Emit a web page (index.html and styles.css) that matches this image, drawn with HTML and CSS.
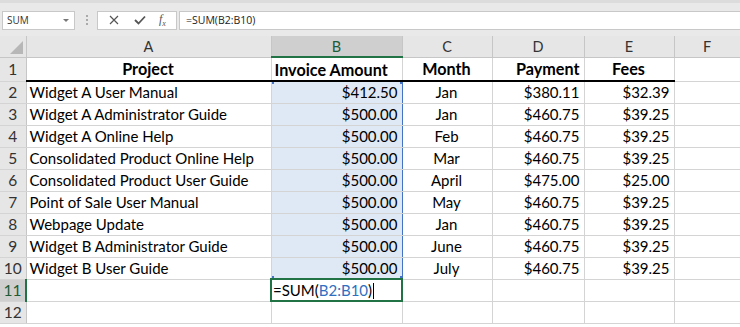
FILE: index.html
```html
<!DOCTYPE html>
<html lang="en">
<head>
    <meta charset="UTF-8">
    <title>Planilha</title>
    <link rel="stylesheet" href="styles.css">
</head>
<body>
    <div class="barra-formula">
        <div class="caixa-nome">
            <span>SUM</span>
            <span class="seta"></span>
        </div>
        <div class="pontos"><i></i><i></i><i></i></div>
        <div class="botoes-funcao">
            <svg width="12" height="12" viewBox="0 0 12 12"><path d="M2 2 L10 10 M10 2 L2 10" stroke="#555" stroke-width="1.2" fill="none"/></svg>
            <svg width="14" height="12" viewBox="0 0 14 12"><path d="M2 6 L5.5 9.5 L12 2.5" stroke="#555" stroke-width="1.8" fill="none"/></svg>
            <span class="fx">f<sub>x</sub></span>
        </div>
        <div class="entrada-formula">=SUM(B2:B10)</div>
    </div>
    <table class="planilha">
        <colgroup>
            <col style="width:26px">
            <col style="width:245px">
            <col style="width:131px">
            <col style="width:90px">
            <col style="width:92px">
            <col style="width:90px">
            <col style="width:66px">
        </colgroup>
        <thead>
            <tr>
                <th class="canto"><span class="triangulo"></span></th>
                <th>A</th>
                <th class="col-ativa">B</th>
                <th>C</th>
                <th>D</th>
                <th>E</th>
                <th>F</th>
            </tr>
        </thead>
        <tbody>
            <tr class="titulos">
                <th>1</th>
                <td class="centro">Project</td>
                <td>Invoice Amount</td>
                <td class="centro">Month</td>
                <td class="direita">Payment</td>
                <td class="centro">Fees</td>
                <td class="vazio"></td>
            </tr>
            <tr>
                <th>2</th><td>Widget A User Manual</td><td class="direita sel sel-topo">$412.50</td><td class="centro">Jan</td><td class="direita">$380.11</td><td class="direita">$32.39</td><td></td>
            </tr>
            <tr>
                <th>3</th><td>Widget A Administrator Guide</td><td class="direita sel">$500.00</td><td class="centro">Jan</td><td class="direita">$460.75</td><td class="direita">$39.25</td><td></td>
            </tr>
            <tr>
                <th>4</th><td>Widget A Online Help</td><td class="direita sel">$500.00</td><td class="centro">Feb</td><td class="direita">$460.75</td><td class="direita">$39.25</td><td></td>
            </tr>
            <tr>
                <th>5</th><td>Consolidated Product Online Help</td><td class="direita sel">$500.00</td><td class="centro">Mar</td><td class="direita">$460.75</td><td class="direita">$39.25</td><td></td>
            </tr>
            <tr>
                <th>6</th><td>Consolidated Product User Guide</td><td class="direita sel">$500.00</td><td class="centro">April</td><td class="direita">$475.00</td><td class="direita">$25.00</td><td></td>
            </tr>
            <tr>
                <th>7</th><td>Point of Sale User Manual</td><td class="direita sel">$500.00</td><td class="centro">May</td><td class="direita">$460.75</td><td class="direita">$39.25</td><td></td>
            </tr>
            <tr>
                <th>8</th><td>Webpage Update</td><td class="direita sel">$500.00</td><td class="centro">Jan</td><td class="direita">$460.75</td><td class="direita">$39.25</td><td></td>
            </tr>
            <tr>
                <th>9</th><td>Widget B Administrator Guide</td><td class="direita sel">$500.00</td><td class="centro">June</td><td class="direita">$460.75</td><td class="direita">$39.25</td><td></td>
            </tr>
            <tr>
                <th>10</th><td>Widget B User Guide</td><td class="direita sel sel-base">$500.00</td><td class="centro">July</td><td class="direita">$460.75</td><td class="direita">$39.25</td><td></td>
            </tr>
            <tr>
                <th class="linha-ativa">11</th><td></td><td class="ativa">=SUM(<span class="ref">B2:B10</span>)<span class="cursor"></span></td><td></td><td></td><td></td><td></td>
            </tr>
            <tr>
                <th>12</th><td></td><td></td><td></td><td></td><td></td><td></td>
            </tr>
        </tbody>
    </table>
</body>
</html>
```

FILE: styles.css
```css
* {
    box-sizing: border-box;
}
body {
    margin: 0;
    width: 740px;
    height: 327px;
    overflow: hidden;
    background: #fff;
    font-family: Lato, 'Open Sans', sans-serif;
}
.barra-formula {
    display: flex;
    align-items: center;
    height: 36px;
    padding: 1px 0 0 2px;
    background: #e9e9e9;
    border-top: 3px solid #dcdcdc;
}
.caixa-nome {
    display: flex;
    align-items: center;
    justify-content: space-between;
    width: 73px;
    height: 19px;
    padding: 0 5px 0 4px;
    background: #fff;
    border: 1px solid #c8c8c8;
    font-family: 'Open Sans', sans-serif;
    font-size: 10px;
    color: #333;
}
.seta {
    width: 0;
    height: 0;
    border-left: 3px solid transparent;
    border-right: 3px solid transparent;
    border-top: 3px solid #777;
}
.pontos {
    display: flex;
    flex-direction: column;
    gap: 2px;
    margin: 0 9px 0 11px;
}
.pontos i {
    width: 2px;
    height: 2px;
    background: #aaa;
}
.botoes-funcao {
    display: flex;
    align-items: center;
    justify-content: space-around;
    width: 80px;
    height: 19px;
    padding: 0 4px;
    background: #fff;
    border: 1px solid #c8c8c8;
}
.fx {
    font-family: 'Liberation Serif', serif;
    font-style: italic;
    font-size: 12px;
    color: #555;
}
.fx sub {
    font-size: 8px;
}
.entrada-formula {
    flex: 1;
    height: 19px;
    margin-left: 2px;
    padding-left: 6px;
    background: #fff;
    border: 1px solid #c8c8c8;
    border-right: none;
    font-family: 'Open Sans', sans-serif;
    font-size: 10.5px;
    line-height: 17px;
    color: #222;
}
.planilha {
    table-layout: fixed;
    border-collapse: collapse;
    width: 740px;
    font-size: 15px;
    color: #000;
}
.planilha thead th {
    height: 21px;
    padding: 0;
    background: #e6e6e6;
    border-right: 1px solid #c6c6c6;
    border-bottom: 1px solid #c6c6c6;
    font-weight: normal;
    font-size: 14.5px;
    color: #333;
}
.planilha thead th.col-ativa {
    background: #cfcfcf;
    color: #1d5c37;
    border-bottom: 2px solid #217346;
}
.canto {
    position: relative;
}
.triangulo {
    position: absolute;
    right: 3px;
    bottom: 3px;
    width: 0;
    height: 0;
    border-left: 13px solid transparent;
    border-bottom: 13px solid #b7b7b7;
}
.planilha tbody th {
    padding: 0;
    background: #e6e6e6;
    border-right: 1px solid #c6c6c6;
    border-bottom: 1px solid #d4d4d4;
    font-weight: normal;
    font-size: 15.5px;
    color: #333;
}
.planilha tbody th.linha-ativa {
    background: #cfcfcf;
    color: #1d5c37;
    border-right: 2px solid #217346;
}
.planilha td {
    height: 22px;
    padding: 0 4px 0 3px;
    white-space: nowrap;
    overflow: hidden;
    border-right: 1px solid #d4d4d4;
    border-bottom: 1px solid #d4d4d4;
}
.planilha tr.titulos td {
    height: 24px;
    font-size: 16.2px;
    font-weight: bold;
    border-bottom: 2px solid #000;
}
.planilha tr.titulos td.vazio {
    border-bottom: 1px solid #d4d4d4;
}
.planilha tr.titulos th {
    border-bottom: 1px solid #d4d4d4;
}
.centro {
    text-align: center;
}
.direita {
    text-align: right;
}
.planilha td.sel {
    position: relative;
    background: #dfe8f5;
    border-left: 1px solid #4472c4;
    border-right: 1px solid #4472c4;
}
.planilha td.sel-topo::before,
.planilha td.sel-topo::after,
.planilha td.sel-base::before,
.planilha td.sel-base::after {
    content: "";
    position: absolute;
    width: 5px;
    height: 5px;
    background: #4472c4;
}
.planilha td.sel-topo::before {
    left: -3px;
    top: -3px;
}
.planilha td.sel-topo::after {
    right: -3px;
    top: -3px;
}
.planilha td.sel-base::before {
    left: -3px;
    bottom: -3px;
}
.planilha td.sel-base::after {
    right: -3px;
    bottom: -3px;
}
.planilha td.ativa {
    border: 2px solid #217346;
    padding-left: 1px;
}
.ref {
    color: #2e6fc1;
}
.cursor {
    display: inline-block;
    width: 1px;
    height: 16px;
    margin-left: 1px;
    vertical-align: -3px;
    background: #000;
}
```
